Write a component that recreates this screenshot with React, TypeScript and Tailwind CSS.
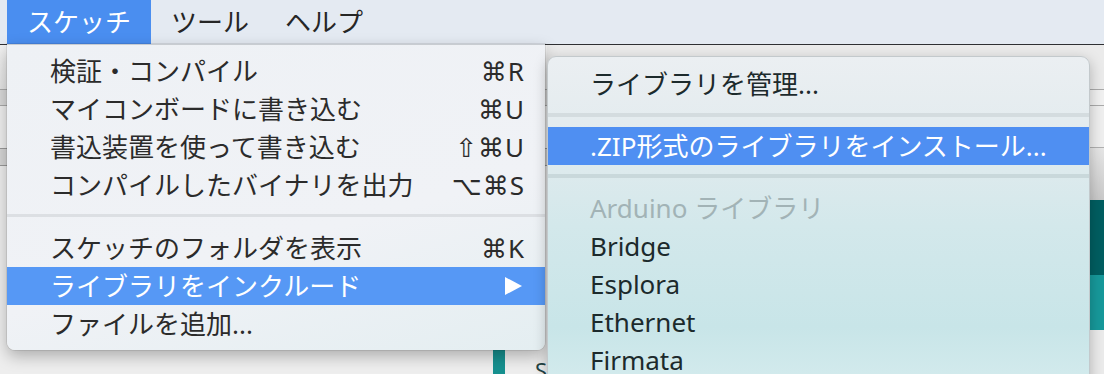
const font = "font-['Noto_Sans','Noto_Sans_CJK_JP',sans-serif]";

type Item = { label: string; key?: string; active?: boolean; arrow?: boolean };

const mainTop: Item[] = [
  { label: "検証・コンパイル", key: "⌘R" },
  { label: "マイコンボードに書き込む", key: "⌘U" },
  { label: "書込装置を使って書き込む", key: "⇧⌘U" },
  { label: "コンパイルしたバイナリを出力", key: "⌥⌘S" },
];

const mainBottom: Item[] = [
  { label: "スケッチのフォルダを表示", key: "⌘K" },
  { label: "ライブラリをインクルード", active: true, arrow: true },
  { label: "ファイルを追加..." },
];

const libs = ["Bridge", "Esplora", "Ethernet", "Firmata"];

function Row({ item }: { item: Item }) {
  return (
    <div
      className={`h-[38px] flex items-center pl-[43px] pr-[20px] leading-[38px] ${
        item.active ? "bg-[#5698f5] text-white" : "text-[#2b2b2b]"
      }`}
    >
      <span className="flex-1">{item.label}</span>
      {item.key && (
        <span className="font-['Noto_Sans','DejaVu_Sans',sans-serif] tracking-[1px]">{item.key}</span>
      )}
      {item.arrow && (
        <svg width="18" height="18" viewBox="0 0 18 18" className="mr-[3px]">
          <polygon points="1,0 18,9 1,18" fill="white" />
        </svg>
      )}
    </div>
  );
}

function MainMenu() {
  return (
    <div className="absolute left-[7px] top-[44px] w-[538px] pt-[7px] pb-[7px] rounded-b-[8px] border-t border-[#c8ccd1] bg-[linear-gradient(165deg,#eef1f5_0%,#f0f2f6_60%,#e4eef1_100%)] shadow-[0_6px_16px_rgba(0,0,0,0.28),0_0_0_1px_rgba(0,0,0,0.08)] text-[26px]">
      {mainTop.map((i) => (
        <Row key={i.label} item={i} />
      ))}
      <div className="h-[25px] pt-[10px]">
        <div className="h-[3px] bg-[#dcdfe3]" />
      </div>
      {mainBottom.map((i) => (
        <Row key={i.label} item={i} />
      ))}
    </div>
  );
}

function SubMenu() {
  return (
    <div className="absolute left-[547px] top-[56px] w-[543px] h-[340px] pt-[8px] rounded-t-[9px] border border-[#c3c9cc] bg-[linear-gradient(180deg,#ebeff2_0%,#e2ebee_25%,#d3e8eb_50%,#c8e5e8_80%,#d6ecee_100%)] shadow-[0_4px_14px_rgba(0,0,0,0.25)] text-[26px] text-[#1c2a2c]">
      <div className="h-[38px] leading-[38px] pl-[42px]">ライブラリを管理...</div>
      <div className="h-[24px] pt-[10px]">
        <div className="h-[4px] bg-[#d4dcdf]" />
      </div>
      <div className="h-[38px] leading-[38px] pl-[42px] bg-[#4f8ff2] text-white">
        .ZIP形式のライブラリをインストール...
      </div>
      <div className="h-[24px] pt-[9px]">
        <div className="h-[4px] bg-[#c9d8db]" />
      </div>
      <div className="h-[38px] leading-[38px] pl-[42px] text-[#a2b3b6]">Arduino ライブラリ</div>
      {libs.map((l) => (
        <div key={l} className="h-[38px] leading-[38px] pl-[42px]">
          {l}
        </div>
      ))}
    </div>
  );
}

export default function App() {
  return (
    <div className={`relative w-[1104px] h-[374px] overflow-hidden bg-[#ececec] ${font}`}>
      <header className="h-[45px] flex items-stretch pl-[7px] bg-[#e4eaf2] border-b border-[#2f3033] text-[26px] text-[#262626]">
        <div className="px-[20px] flex items-center bg-[#4a8ef0] text-white">スケッチ</div>
        <div className="pl-[20px] pr-[16px] flex items-center">ツール</div>
        <div className="px-[20px] flex items-center">ヘルプ</div>
      </header>

      <div className="flex h-[329px]">
        <div className="w-[547px] flex flex-col">
          <div className="h-[44px] bg-[linear-gradient(180deg,#f2f2f2,#e4e4e4)]" />
          <div className="h-[17px] bg-[#d9d9d9] border-y border-[#a9a9a9]" />
          <div className="h-[42px] bg-[#efefef]" />
          <div className="h-[18px] bg-[#d6d6d6] border-y border-[#999999]" />
          <div className="flex-1 bg-[#eeeeee] flex items-end">
            <div className="ml-[493px] w-[14px] h-[26px] bg-[#16908f]" />
            <div className="ml-[30px] h-[14px] text-[22px] leading-[20px] text-[#244446]">S</div>
          </div>
        </div>
        <div className="flex-1 flex flex-col">
          <div className="h-[44px] bg-[#ebebeb]" />
          <div className="h-[17px] bg-[#f1f1f1] border-y border-[#aaaaaa]" />
          <div className="h-[42px] bg-[#efefef] border-b border-[#b0b0b0]" />
          <div className="h-[52px] bg-[linear-gradient(180deg,#e6e6e6,#c9c9c9)]" />
          <div className="h-[75px] bg-[#005e61]" />
          <div className="h-[55px] bg-[#17999b]" />
          <div className="flex-1 bg-[#ebebeb]" />
        </div>
      </div>

      <MainMenu />
      <SubMenu />
    </div>
  );
}
